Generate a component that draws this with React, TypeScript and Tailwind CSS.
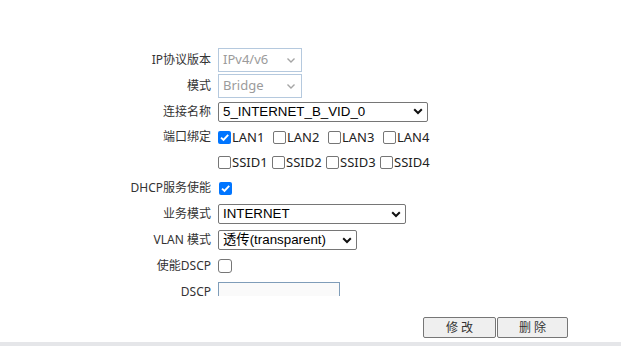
import React from "react";

const LABEL = "text-[12px] text-[#333] leading-none";
const labelFont = { fontFamily: '"Noto Sans", "Noto Sans CJK SC", sans-serif' };

function Chevron({ disabled }: { disabled?: boolean }) {
  return disabled ? (
    <svg width="10" height="7" viewBox="0 0 10 7" className="shrink-0">
      <path d="M1.5 1.5 L5 5 L8.5 1.5" fill="none" stroke="#a5a5a5" strokeWidth="1.4" />
    </svg>
  ) : (
    <svg width="10" height="7" viewBox="0 0 10 7" className="shrink-0">
      <path d="M1.2 1.3 L5 5 L8.8 1.3" fill="none" stroke="#111" strokeWidth="2" />
    </svg>
  );
}

function Checkbox({ checked }: { checked?: boolean }) {
  return checked ? (
    <span className="inline-flex w-[13px] h-[13px] rounded-[2px] bg-[#0075ff] items-center justify-center shrink-0">
      <svg width="11" height="11" viewBox="0 0 11 11">
        <path d="M2 5.6 L4.5 8 L9.2 2.8" fill="none" stroke="#fff" strokeWidth="1.9" />
      </svg>
    </span>
  ) : (
    <span className="inline-block w-[13px] h-[13px] rounded-[2px] border border-[#767676] bg-white shrink-0" />
  );
}

function Label({ text }: { text: string }) {
  return (
    <div className={"w-[211px] text-right whitespace-nowrap " + LABEL} style={labelFont}>
      {text}
    </div>
  );
}

export default function App() {
  const arial = { fontFamily: '"Liberation Sans", Arial, sans-serif' };
  const mixed = { fontFamily: '"Liberation Sans", "Noto Sans CJK SC", sans-serif' };
  return (
    <div className="w-[621px] h-[346px] bg-white overflow-hidden flex flex-col">
      <div className="h-[47px] shrink-0" />
      <div className="h-[249px] shrink-0 overflow-hidden flex flex-col">
        {/* IP version */}
        <div className="h-[26px] shrink-0 flex items-center">
          <Label text="IP协议版本" />
          <div className="ml-[7px] w-[84px] h-[24px] border border-[#b5c9de] bg-white flex items-center justify-between pl-[4px] pr-[5px]">
            <span className="text-[13px] text-[#9b9b9b]" style={labelFont}>IPv4/v6</span>
            <Chevron disabled />
          </div>
        </div>
        {/* mode */}
        <div className="h-[26px] shrink-0 flex items-center">
          <Label text="模式" />
          <div className="ml-[7px] w-[84px] h-[24px] border border-[#b5c9de] bg-white flex items-center justify-between pl-[4px] pr-[5px]">
            <span className="text-[13px] text-[#9b9b9b]" style={labelFont}>Bridge</span>
            <Chevron disabled />
          </div>
        </div>
        {/* connection name */}
        <div className="h-[25px] shrink-0 flex items-center">
          <Label text="连接名称" />
          <div className="ml-[7px] w-[210px] h-[20px] border border-[#767676] rounded-[2px] bg-white flex items-center justify-between pl-[4px] pr-[4px]">
            <span className="text-[13.33px] text-black leading-none" style={arial}>5_INTERNET_B_VID_0</span>
            <Chevron />
          </div>
        </div>
        {/* port binding LAN */}
        <div className="h-[26px] shrink-0 flex items-center">
          <Label text="端口绑定" />
          <div className="ml-[7px] flex items-center">
            {["LAN1", "LAN2", "LAN3", "LAN4"].map((t, i) => (
              <span key={t} className="w-[55px] flex items-center">
                <Checkbox checked={i === 0} />
                <span className="text-[13px] text-[#222] leading-none ml-[1px]" style={labelFont}>{t}</span>
              </span>
            ))}
          </div>
        </div>
        {/* SSID */}
        <div className="h-[25px] shrink-0 flex items-center">
          <div className="w-[211px]" />
          <div className="ml-[7px] flex items-center">
            {["SSID1", "SSID2", "SSID3", "SSID4"].map((t) => (
              <span key={t} className="w-[54px] flex items-center">
                <Checkbox />
                <span className="text-[13px] text-[#222] leading-none ml-[1px]" style={labelFont}>{t}</span>
              </span>
            ))}
          </div>
        </div>
        {/* DHCP */}
        <div className="h-[26px] shrink-0 flex items-center">
          <Label text="DHCP服务使能" />
          <div className="ml-[8px] flex items-center">
            <Checkbox checked />
          </div>
        </div>
        {/* service mode */}
        <div className="h-[26px] shrink-0 flex items-center">
          <Label text="业务模式" />
          <div className="ml-[7px] w-[188px] h-[20px] border border-[#767676] rounded-[2px] bg-white flex items-center justify-between pl-[4px] pr-[4px]">
            <span className="text-[13.33px] text-black leading-none" style={arial}>INTERNET</span>
            <Chevron />
          </div>
        </div>
        {/* VLAN mode */}
        <div className="h-[26px] shrink-0 flex items-center">
          <Label text="VLAN 模式" />
          <div className="ml-[7px] w-[139px] h-[20px] border border-[#767676] rounded-[2px] bg-white flex items-center justify-between pl-[4px] pr-[4px]">
            <span className="text-[13.33px] text-black leading-none" style={mixed}>透传(transparent)</span>
            <Chevron />
          </div>
        </div>
        {/* DSCP enable */}
        <div className="h-[26px] shrink-0 flex items-center">
          <Label text="使能DSCP" />
          <div className="ml-[7px] flex items-center">
            <span className="inline-block w-[14px] h-[14px] rounded-[3px] border border-[#767676] bg-white" />
          </div>
        </div>
        {/* DSCP */}
        <div className="h-[26px] shrink-0 flex items-center">
          <Label text="DSCP" />
          <div className="ml-[7px] w-[122px] h-[20px] border border-[#7f9db9] bg-[#fafafa]" />
        </div>
      </div>
      <div className="h-[21px] shrink-0" />
      <div className="h-[21px] shrink-0 flex">
        <div className="w-[423px]" />
        <button className="w-[73px] h-[21px] border border-[#767676] rounded-[2px] bg-[#efefef] text-[12px] text-[#333] leading-none" style={labelFont}>
          修 改
        </button>
        <button className="ml-[1px] w-[71px] h-[21px] border border-[#767676] rounded-[2px] bg-[#efefef] text-[12px] text-[#333] leading-none" style={labelFont}>
          删 除
        </button>
      </div>
      <div className="h-[4px] shrink-0" />
      <div className="h-[4px] shrink-0 bg-[#e5e6e9]" />
    </div>
  );
}
